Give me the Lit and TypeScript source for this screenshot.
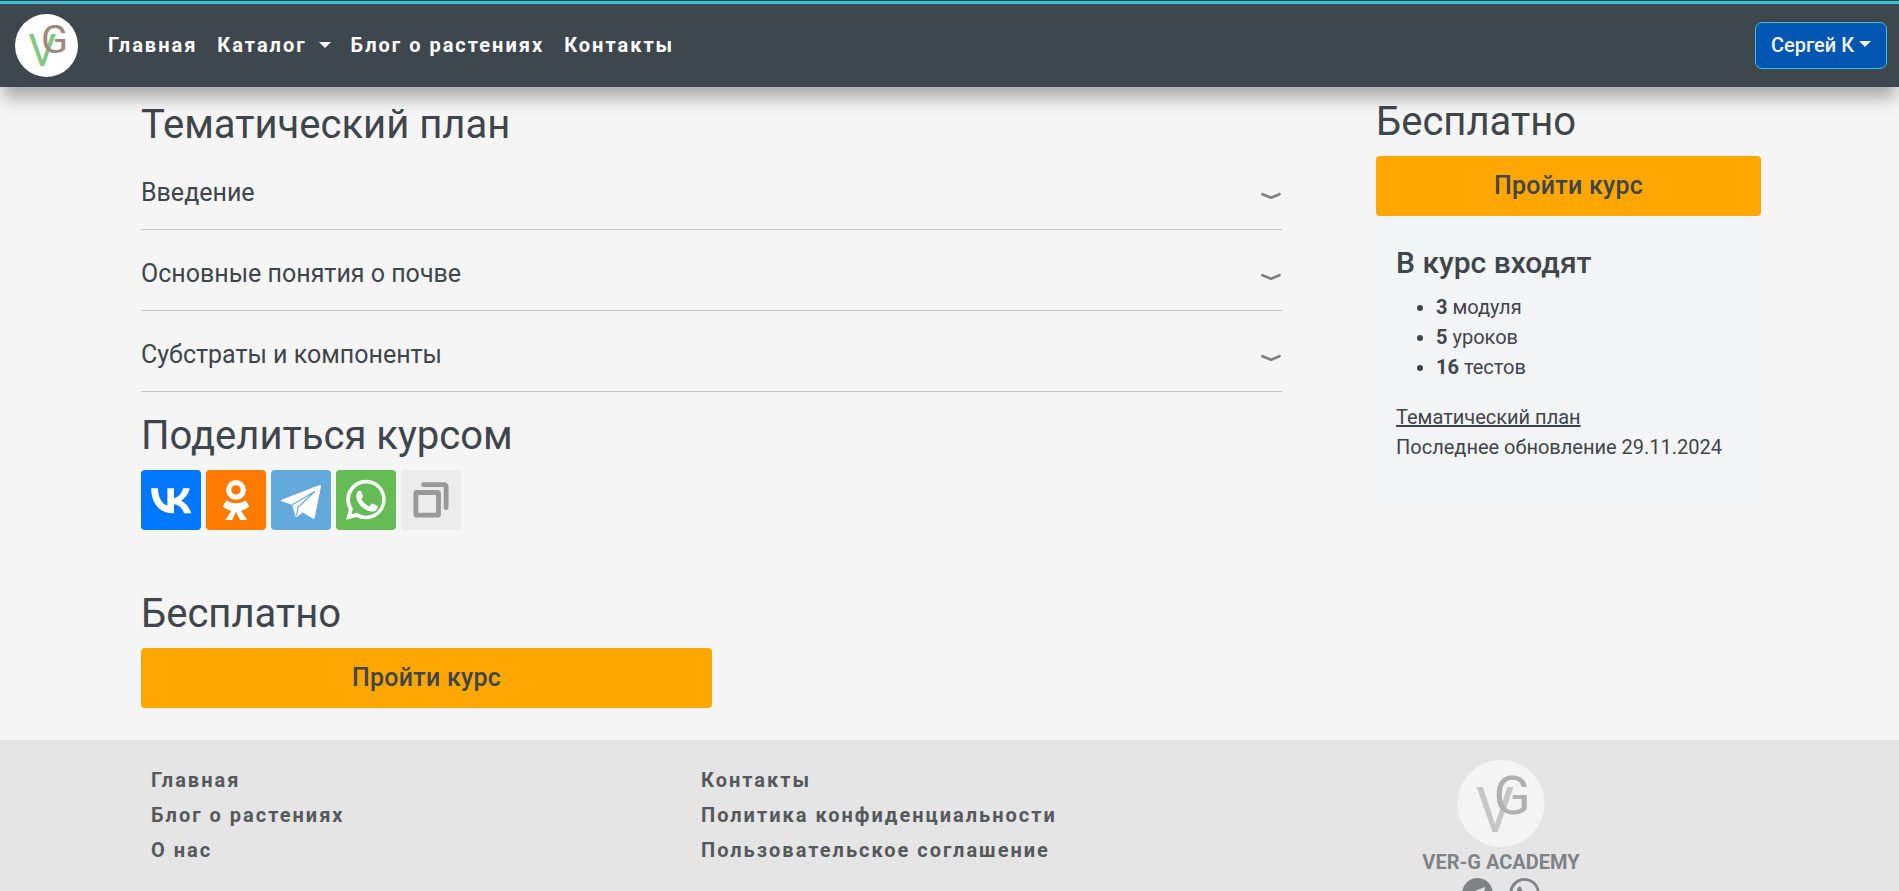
import { LitElement, html, css, svg } from "lit";
import { customElement, property } from "lit/decorators.js";

@customElement("vg-logo")
class VgLogo extends LitElement {
  static styles = css`
    :host { display: block; }
    svg { display: block; width: 100%; height: 100%; }
    text { font-family: Roboto, sans-serif; font-weight: 400; letter-spacing: 0; }
    .v { fill: #81c784; }
    .g { fill: #a1887f; }
  `;
  render() {
    return html`<svg viewBox="0 0 63 63">
      <circle cx="31.5" cy="31.5" r="31.5" fill="#fff" />
      <text class="v" x="13.3" y="51.8" font-size="45" textLength="28" lengthAdjust="spacingAndGlyphs">V</text>
      <text class="g" x="26" y="39.4" font-size="39.5" textLength="27" lengthAdjust="spacingAndGlyphs">G</text>
    </svg>`;
  }
}

const waBubble = svg`<path fill-rule="evenodd" d="M4 19.9l1.15-4.1A7.9 7.9 0 1 1 8.2 18.75zM6.2 17.7l2.15-.6A6.45 6.45 0 1 0 6.75 15.5z"/>
  <path d="M9.4 8.3c.35-.05.55.05.7.4l.65 1.55c.1.3.05.5-.15.75l-.5.6c.8 1.5 1.9 2.4 3.3 2.95l.75-.9c.2-.25.4-.25.65-.15l1.6.8c.25.1.35.25.3.6-.15 1.05-1.1 1.75-2.1 1.75-3 0-6.5-3.3-6.5-6.3 0-1 .5-1.9 1.3-2.05z"/>`;

const shareIcons = [
  { cls: "vk", icon: svg`<path d="M12.878 17.304c-5.411 0-8.695-3.755-8.823-9.994h2.74c.086 4.583 2.171 6.528 3.77 6.925V7.31h2.627v3.954c1.542-.17 3.155-1.97 3.698-3.954h2.584c-.413 2.441-2.17 4.24-3.412 4.983 1.242.6 3.24 2.17 4.011 4.998h-2.84c-.6-1.9-2.07-3.37-4.04-3.57v3.583z"/>` },
  { cls: "ok", icon: svg`<path fill-rule="evenodd" d="M12 4a3.97 3.97 0 1 1 0 7.94A3.97 3.97 0 0 1 12 4zm0 2.1a1.87 1.87 0 1 0 0 3.74 1.87 1.87 0 0 0 0-3.74z"/><path d="M8.1 12.1c2.4 1.6 5.600 1.600 7.800 0l1.400 2.500c-.9.8-2.100 1.400-3.300 1.700l2.500 3.700h-2.900L12 16.700 10.500 20H7.700l2.400-3.700c-1.300-.3-2.500-.9-3.400-1.700z"/>` },
  { cls: "tg", icon: svg`<path d="M4.300 11.900 19.400 6c.5-.15.700.1.600.600l-2.500 12.400c-.1.5-.4.600-.8.400L12.700 17l-2.300 1.700c-.3.2-.5.100-.6-.2L8.400 13.900l-4.100-1.400c-.4-.15-.4-.45 0-.6z"/><path d="M8.500 13.900l9-5.300-6.700 6.300-.6 3.400" fill="none" stroke="#64a9dc" stroke-width=".45" stroke-linejoin="round"/>` },
  { cls: "wa", icon: waBubble },
  { cls: "copy", icon: svg`<g fill="none" stroke="#999" stroke-width="1.950" stroke-linejoin="round" stroke-linecap="round"><rect x="5.950" y="9" width="9.050" height="9.050" rx=".4"/><path d="M9 5.850h8q1.050 0 1.050 1.050v8.100"/></g>` },
];

@customElement("accordion-row")
class AccordionRow extends LitElement {
  @property() label = "";
  static styles = css`
    :host { display: flex; justify-content: space-between; align-items: flex-start; height: 81px; padding-top: 25px;
      border-bottom: 1px solid #c6c6c6; font-size: 25px; line-height: 38px; }
    svg { width: 22px; height: 8px; margin-top: 18px; }
  `;
  render() {
    return html`<span>${this.label}</span>
      <svg viewBox="0 0 22 8"><path d="M2.500 2.200 11 5.700l8.500-3.500" fill="none" stroke="#808080" stroke-width="2.700" stroke-linecap="round" stroke-linejoin="round"/></svg>`;
  }
}

@customElement("app-root")
class AppRoot extends LitElement {
  static styles = css`
    :host { display: flex; flex-direction: column; height: 891px; overflow: hidden; background: #f5f5f5; color: #3e454b;
      font: 400 20px/30px Roboto, sans-serif; }
    * { box-sizing: border-box; }
    h2, h3, ul, p { margin: 0; font-weight: 400; }
    header { position: relative; z-index: 1; flex: none; height: 87px; background: #3f474e; border-top: 1px solid #3a4045;
      box-shadow: 0 14px 15px -3px rgba(0, 0, 0, .3); }
    .stripe { height: 3px; background: #3dc1da; }
    .bar { display: flex; align-items: center; height: 83px; padding: 0 12px 0 15px; }
    .bar vg-logo { width: 63px; height: 63px; }
    nav { display: flex; flex: 1; margin-left: 30px; gap: 20px; padding-bottom: 2px; color: #fff; font-weight: 700; letter-spacing: 2px; }
    .caret { display: inline-block; border: 6px solid transparent; border-top-color: currentColor; border-bottom: 0; vertical-align: 4px; }
    nav .caret { margin-left: 12px; }
    .user { height: 47px; width: 132px; border: 1px solid #36c3e0; border-radius: 7px; background: #0056b0; color: #f5f5f5; padding-bottom: 2px;
      display: flex; align-items: center; justify-content: center; gap: 5px; font-weight: 500; white-space: nowrap; }
    .user .caret { margin-bottom: 1px; }
    main { flex: none; height: 653px; display: grid; grid-template-columns: 1141px 385px; column-gap: 94px; padding-left: 141px; align-items: start; }
    h2 { font-size: 40px; line-height: 48px; }
    .plan { padding-top: 14px; }
    .share-title { margin-top: 20px; }
    .share { display: flex; gap: 5px; margin-top: 10px; }
    .share svg { width: 60px; height: 60px; border-radius: 4px; fill: #fff; }
    .vk { background: #07f; } .ok { background: #ff7a00; } .tg { background: #64a9dc; } .wa { background: #65bc54; } .copy { background: #ececec; }
    .free { margin-top: 60px; }
    .cta { display: flex; align-items: center; justify-content: center; height: 60px; margin-top: 10px; border-radius: 4px;
      background: #ffa700; font-size: 25px; font-weight: 500; letter-spacing: .25px; }
    .half { width: 571px; }
    aside { padding-top: 11px; }
    .card { height: 285px; background: #f3f4f6; border-radius: 4px; padding: 29px 20px; }
    h3 { font-size: 30px; line-height: 36px; font-weight: 500; }
    ul { padding-left: 40px; margin: 11px 0 20px; }
    b { font-weight: 700; }
    .u { text-decoration: underline; }
    footer { flex: none; height: 151px; background: #e5e5e5; display: grid; grid-template-columns: 550px 550px 500px; padding: 22px 0 0 151px; }
    .links { display: flex; flex-direction: column; gap: 5px; color: #55595c; font-weight: 700; letter-spacing: 2px; line-height: 30px; padding-top: 3px; }
    .brand { display: flex; flex-direction: column; align-items: center; width: 500px; margin-top: -2px; color: #7f8386; font-weight: 700; }
    .brand vg-logo { width: 88px; height: 87px; filter: grayscale(1); opacity: .6; }
    .social { display: flex; gap: 16px; margin-top: 1px; padding-right: 1px; }
    .social svg { width: 31px; height: 31px; fill: #7f8386; }
  `;
  render() {
    return html`
      <header>
        <div class="stripe"></div>
        <div class="bar">
          <vg-logo></vg-logo>
          <nav><span>Главная</span><span>Каталог<i class="caret"></i></span><span>Блог о растениях</span><span>Контакты</span></nav>
          <div class="user">Сергей К<i class="caret"></i></div>
        </div>
      </header>
      <main>
        <section class="plan">
          <h2>Тематический план</h2>
          ${["Введение", "Основные понятия о почве", "Субстраты и компоненты"].map((t) => html`<accordion-row .label=${t}></accordion-row>`)}
          <h2 class="share-title">Поделиться курсом</h2>
          <div class="share">${shareIcons.map((s) => html`<svg class=${s.cls} viewBox="0 0 24 24">${s.icon}</svg>`)}</div>
          <h2 class="free">Бесплатно</h2>
          <div class="cta half">Пройти курс</div>
        </section>
        <aside>
          <h2>Бесплатно</h2>
          <div class="cta">Пройти курс</div>
          <div class="card">
            <h3>В курс входят</h3>
            <ul><li><b>3</b> модуля</li><li><b>5</b> уроков</li><li><b>16</b> тестов</li></ul>
            <p class="u">Тематический план</p>
            <p>Последнее обновление 29.11.2024</p>
          </div>
        </aside>
      </main>
      <footer>
        <div class="links"><span>Главная</span><span>Блог о растениях</span><span>О нас</span></div>
        <div class="links"><span>Контакты</span><span>Политика конфиденциальности</span><span>Пользовательское соглашение</span></div>
        <div class="brand">
          <vg-logo></vg-logo>
          <span>VER-G ACADEMY</span>
          <div class="social">
            <svg viewBox="0 0 31 31"><path fill-rule="evenodd" d="M15.500 0a15.500 15.500 0 1 1 0 31 15.500 15.500 0 0 1 0-31zM23 9 6.500 15.500l5 2 2 6 3-3 4.500 3z"/></svg>
            <svg viewBox="3.900 3.900 16.100 16.100">${waBubble}</svg>
          </div>
        </div>
      </footer>`;
  }
}
